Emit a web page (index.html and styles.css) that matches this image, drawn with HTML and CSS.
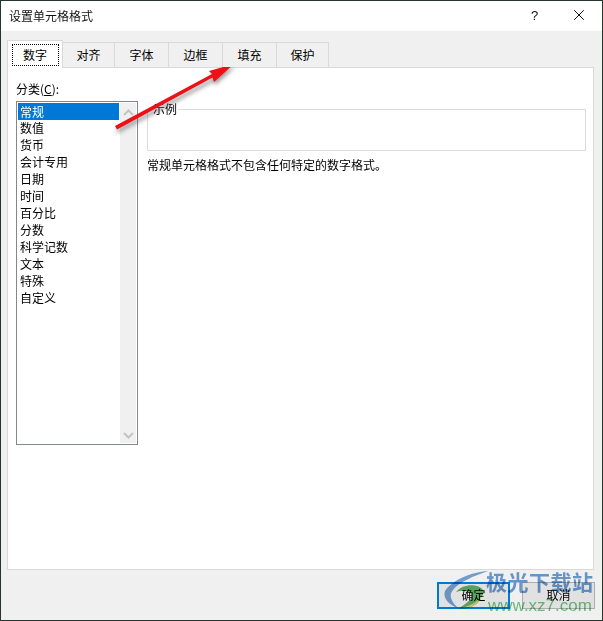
FILE: index.html
```
<!DOCTYPE html>
<html lang="zh-CN">
<head>
<meta charset="utf-8">
<title>设置单元格格式</title>
<link rel="stylesheet" href="styles.css">
</head>
<body>
<div class="dialog">
  <header class="titlebar">
    <span class="title">设置单元格格式</span>
    <span class="help">?</span>
    <svg class="close" width="10" height="10" viewBox="0 0 10 10"><path d="M0.2 0.2L9.800 9.800M9.800 0.2L0.2 9.800" stroke="#111" stroke-width="1" fill="none"/></svg>
  </header>
  <main class="body">
    <nav class="tabs">
      <div class="tab active"><span class="focus">数字</span></div>
      <div class="tab narrow">对齐</div>
      <div class="tab">字体</div>
      <div class="tab">边框</div>
      <div class="tab">填充</div>
      <div class="tab narrow">保护</div>
    </nav>
    <section class="panel">
      <div class="left">
        <div class="label">分类(<u>C</u>):</div>
        <div class="listbox">
          <ul class="items">
            <li class="sel">常规</li>
            <li>数值</li>
            <li>货币</li>
            <li>会计专用</li>
            <li>日期</li>
            <li>时间</li>
            <li>百分比</li>
            <li>分数</li>
            <li>科学记数</li>
            <li>文本</li>
            <li>特殊</li>
            <li>自定义</li>
          </ul>
          <div class="scroll">
            <svg width="11" height="7" viewBox="0 0 11 7"><path d="M1 6L5.500 1.500L10 6" stroke="#c4c4c4" stroke-width="2" fill="none"/></svg>
            <svg width="11" height="7" viewBox="0 0 11 7"><path d="M1 1L5.500 5.500L10 1" stroke="#c4c4c4" stroke-width="2" fill="none"/></svg>
          </div>
        </div>
      </div>
      <div class="right">
        <div class="sample"><span class="legend">示例</span></div>
        <p class="desc">常规单元格格式不包含任何特定的数字格式。</p>
      </div>
    </section>
    <footer class="buttons">
      <div class="btn default">确定</div>
      <div class="btn">取消</div>
    </footer>
  </main>
</div>

<svg class="arrow" width="603" height="621" viewBox="0 0 603 621">
  <defs><filter id="sh" x="-20%" y="-30%" width="140%" height="170%"><feGaussianBlur stdDeviation="2"/></filter></defs>
  <path d="M115 127L212 75L209 71L234 64L214 82L213 78L117 130Z" fill="#444" opacity=".55" filter="url(#sh)" transform="translate(1 3)"/>
  <path d="M115 126L212 74L209 71L234 64L214 82L212.500 77.500L117 129.500Z" fill="#ee0f17"/>
</svg>

<div class="mark">
  <svg class="swirl" width="50" height="45" viewBox="0 0 50 45">
    <path d="M44 3C28 4 8 12 1 23C-2 32 8 38 14 40C8 34 4 28 9 22C15 14 30 8 44 3Z" fill="#7aa7d8"/>
    <path d="M12 24C20 14 38 16 40 24C38 32 28 38 14 41C22 36 30 30 27 26C24 22 18 22 12 24Z" fill="#63b768"/>
    <path d="M14 41C24 40 34 34 37 28C38 34 28 42 14 41Z" fill="#d3df5a"/>
  </svg>
  <div class="mark-name">极光下载站</div>
  <div class="mark-url">www.xz7.com</div>
</div>
</body>
</html>
```
FILE: styles.css
```
* { box-sizing: border-box; }
html, body { margin: 0; padding: 0; }
body {
  width: 603px;
  height: 621px;
  overflow: hidden;
  position: relative;
  background: #24352c;
  font-family: "Noto Sans CJK SC", "Liberation Sans", sans-serif;
  font-size: 12px;
  color: #000;
}
.dialog {
  margin: 1px 1px 0 1px;
  height: 619px;
  display: flex;
  flex-direction: column;
  background: #f0f0f0;
}
.titlebar {
  height: 30px;
  flex: none;
  background: #fff;
  display: flex;
  align-items: center;
  padding: 0 18px 2px 8px;
}
.title { flex: 1; font-size: 12px; color: #111; }
.help { font-family: "Liberation Sans", sans-serif; font-size: 13px; width: 43px; color: #111; }
.close { display: block; }
.body {
  flex: 1;
  display: flex;
  flex-direction: column;
  padding: 9px 8px 0 6px;
  min-height: 0;
}
.tabs {
  height: 27px;
  display: flex;
  align-items: flex-end;
  position: relative;
  z-index: 1;
  flex: none;
}
.tab {
  width: 55px;
  height: 25px;
  display: flex;
  align-items: center;
  justify-content: center;
  border: 1px solid #d9d9d9;
  border-bottom: 0;
  margin-left: -1px;
  padding-bottom: 2px;
  background: #f0f0f0;
}
.tab.narrow { width: 53px; }
.tab.active {
  width: 56px;
  height: 28px;
  margin-left: 0;
  margin-bottom: -1px;
  background: #fff;
  z-index: 2;
  align-items: flex-start;
  padding: 3px 0 0;
}
.focus {
  width: 47px;
  height: 22px;
  display: flex;
  align-items: center;
  justify-content: center;
  padding-bottom: 1px;
  border: 1px dotted #000;
}
.panel {
  width: 587px;
  height: 503px;
  flex: none;
  background: #fff;
  border: 1px solid #d9d9d9;
  display: flex;
  padding: 11px 7px 0 8px;
  gap: 9px;
}
.left { width: 122px; flex: none; }
.label { height: 22px; line-height: 19px; }
.listbox {
  width: 122px;
  height: 344px;
  border: 1px solid #828790;
  display: flex;
  padding: 1px;
  background: #fff;
}
.items { list-style: none; margin: 0; padding: 0; width: 101px; flex: none; }
.items li { height: 17px; line-height: 16px; padding-left: 2px; color: #000; }
.items .sel { background: #0078d7; color: #fff; line-height: 17px; }
.scroll {
  flex: 1;
  margin-left: 1px;
  background: #f0f0f0;
  display: flex;
  flex-direction: column;
  justify-content: space-between;
  align-items: center;
  padding: 6px 0 4px;
}
.scroll svg { display: block; }
.right { flex: 1; padding-top: 30px; }
.sample {
  height: 42px;
  border: 1px solid #dcdcdc;
  position: relative;
}
.legend {
  position: absolute;
  left: 5px;
  top: -10px;
  background: #fff;
  line-height: 17px;
  padding-right: 1px;
}
.desc { margin: 5px 0 0; line-height: 17px; }
.buttons {
  display: flex;
  justify-content: flex-end;
  gap: 12px;
  padding: 12px 0 0 0;
  margin-right: -1px;
}
.btn {
  width: 73px;
  height: 27px;
  border: 1px solid #adadad;
  background: #e1e1e1;
  display: flex;
  align-items: center;
  justify-content: center;
  padding-bottom: 2px;
}
.btn.default { border: 2px solid #0078d7; }
.arrow { position: absolute; left: 0; top: 0; pointer-events: none; }
.mark {
  position: absolute;
  left: 444px;
  top: 568px;
  width: 159px;
  height: 53px;
  pointer-events: none;
  mix-blend-mode: multiply;
}
.swirl { position: absolute; left: 0; top: 0; overflow: visible; }
.mark-name {
  position: absolute;
  left: 42px;
  top: 0;
  font-size: 21px;
  line-height: 26px;
  font-weight: 700;
  color: #6d9dd3;
  letter-spacing: 0.500px;
  white-space: nowrap;
}
.mark-url {
  position: absolute;
  left: 44px;
  top: 28px;
  font-family: "Liberation Sans", sans-serif;
  font-size: 17px;
  line-height: 20px;
  color: #74c585;
  white-space: nowrap;
}
```
